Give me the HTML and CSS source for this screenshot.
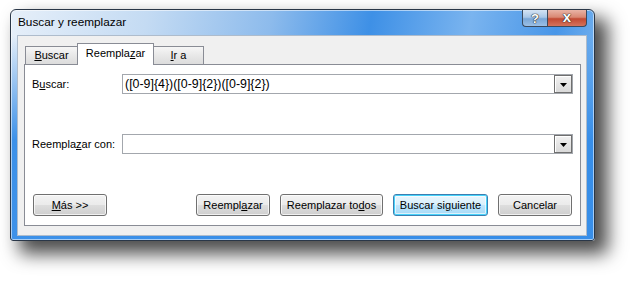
FILE: index.html
```html
<!DOCTYPE html>
<html lang="es">
<head>
    <meta charset="UTF-8">
    <title>Buscar y reemplazar</title>
    <link rel="stylesheet" href="styles.css">
</head>
<body>

<div class="window">
    <div class="titlebar">
        <span class="title">Buscar y reemplazar</span>
        <div class="caption-buttons">
            <span class="cap help">?</span>
            <span class="cap close">x</span>
        </div>
    </div>

    <div class="client">
        <div class="tabs">
            <div class="tab tab-buscar"><u>B</u>uscar</div>
            <div class="tab active">Reempla<u>z</u>ar</div>
            <div class="tab tab-ir"><u>I</u>r a</div>
        </div>

        <div class="panel">
            <div class="field">
                <label for="buscar">B<u>u</u>scar:</label>
                <div class="combo" id="buscar">
                    <span class="combo-text">([0-9]{4})([0-9]{2})([0-9]{2})</span>
                    <span class="combo-btn">
                        <svg width="7" height="4" viewBox="0 0 7 4"><polygon points="0,0 7,0 3.5,4" fill="#000"/></svg>
                    </span>
                </div>
            </div>

            <div class="field">
                <label for="reemplazar">Reempla<u>z</u>ar con:</label>
                <div class="combo" id="reemplazar">
                    <span class="combo-text"></span>
                    <span class="combo-btn">
                        <svg width="7" height="4" viewBox="0 0 7 4"><polygon points="0,0 7,0 3.5,4" fill="#000"/></svg>
                    </span>
                </div>
            </div>

            <div class="actions">
                <button class="btn btn-mas"><u>M</u>ás &gt;&gt;</button>
                <button class="btn btn-reemplazar">Reempl<u>a</u>zar</button>
                <button class="btn btn-todos">Reemplazar to<u>d</u>os</button>
                <button class="btn btn-siguiente default">Buscar si<u>g</u>uiente</button>
                <button class="btn btn-cancelar">Cancelar</button>
            </div>
        </div>
    </div>
</div>

</body>
</html>
```

FILE: styles.css
```css
html {
    background-color: #fff;
}
body {
    margin: 0;
    padding: 9px 0 0 10px;
    min-height: 283px;
    box-sizing: border-box;
    font-family: "Liberation Sans", Arial, sans-serif;
    font-size: 11px;
    color: #000;
}
u {
    text-underline-offset: 1px;
}

/* ventana */
.window {
    box-sizing: border-box;
    width: 585px;
    height: 232px;
    padding: 0 7px 4px 6px;
    border: 1px solid #2a3748;
    border-radius: 6px 6px 3px 3px;
    background:
        linear-gradient(180deg, rgba(52, 140, 232, 0) 0px, rgba(52, 140, 232, 0) 26px, rgba(52, 140, 232, 0.95) 130px),
        linear-gradient(100deg, #e6eff9 0%, #c4dbf3 22%, #8dbbec 42%, #3e90e6 58%, #7ab4ef 74%, #4896e8 88%, #8cc0f2 100%);
    box-shadow: inset 0 0 0 1px rgba(255, 255, 255, 0.55), 11px 11px 18px 2px rgba(0, 0, 0, 0.7);
    display: flex;
    flex-direction: column;
}
.titlebar {
    height: 25px;
    display: flex;
    align-items: flex-start;
    padding-left: 1px;
}
.title {
    font-size: 11.8px;
    line-height: 25px;
    color: #000;
}
.caption-buttons {
    margin-left: auto;
    display: flex;
}
.cap {
    box-sizing: border-box;
    height: 17px;
    border: 1px solid #3b4a5d;
    border-top: none;
    display: flex;
    align-items: center;
    justify-content: center;
    font-weight: bold;
    color: #fff;
    text-shadow: 0 0 1px #2b2b2b, 0 0 1px #2b2b2b, 0 0 1px #2b2b2b;
}
.help {
    width: 25px;
    font-size: 13px;
    border-right: none;
    border-radius: 0 0 0 4px;
    background: linear-gradient(180deg, #d5e4f4 0%, #a9c7e7 45%, #7aa6d6 55%, #9bc0e6 100%);
}
.close {
    width: 40px;
    font-size: 15px;
    line-height: 1;
    padding-bottom: 3px;
    border-radius: 0 0 4px 0;
    background: linear-gradient(180deg, #e9b4a6 0%, #d98873 45%, #c24a33 55%, #d4735c 100%);
}

/* area cliente */
.client {
    box-sizing: border-box;
    height: 201px;
    background-color: #f0f0f0;
    border: 1px solid #aebccc;
    padding: 7px 5px 0 6px;
}
.tabs {
    display: flex;
    align-items: flex-end;
    height: 21px;
    margin-left: 1px;
}
.tab {
    box-sizing: border-box;
    height: 18px;
    border: 1px solid #898c95;
    border-bottom: none;
    background: linear-gradient(180deg, #f6f6f6 0%, #e8e8e8 50%, #dcdcdc 100%);
    text-align: center;
    line-height: 17px;
}
.tab-buscar {
    width: 53px;
}
.tab.active {
    position: relative;
    z-index: 1;
    width: 77px;
    height: 22px;
    margin: 0 -1px -1px -1px;
    background: #fff;
    line-height: 19px;
}
.tab-ir {
    width: 51px;
}
.panel {
    box-sizing: border-box;
    height: 162px;
    border: 1px solid #898c95;
    background-color: #fff;
    padding: 9px 7px 8px 7px;
    display: flex;
    flex-direction: column;
    gap: 40px;
}
.field {
    display: flex;
    align-items: center;
    height: 20px;
}
.field label {
    width: 90px;
}
.combo {
    box-sizing: border-box;
    flex: 1;
    height: 20px;
    border: 1px solid #a3a7ad;
    display: flex;
    align-items: center;
}
.combo-text {
    flex: 1;
    padding-left: 2px;
    font-size: 12.4px;
}
.combo-btn {
    box-sizing: border-box;
    width: 18px;
    height: 18px;
    border: 1px solid #6f6f6f;
    box-shadow: inset 1px 1px 0 #fff;
    background: linear-gradient(180deg, #f2f2f2 0%, #d9d9d9 100%);
    display: flex;
    align-items: center;
    justify-content: center;
    padding-top: 1px;
}

/* botones */
.actions {
    display: flex;
    gap: 10px;
    height: 22px;
    padding: 0 1px 0 1px;
}
.btn {
    box-sizing: border-box;
    height: 22px;
    width: 74px;
    padding: 0;
    border: 1px solid #707070;
    border-radius: 3px;
    background: linear-gradient(180deg, #f3f3f3 0%, #ebebeb 48%, #dddddd 52%, #cfcfcf 100%);
    box-shadow: inset 0 0 0 1px rgba(255, 255, 255, 0.7);
    font-family: "Liberation Sans", Arial, sans-serif;
    font-size: 11px;
    color: #000;
}
.btn-reemplazar {
    margin-left: auto;
}
.btn-todos {
    width: 103px;
}
.btn-siguiente {
    width: 95px;
}
.btn.default {
    border-color: #3c7fb1;
    background: linear-gradient(180deg, #eaf6fd 0%, #d9f0fc 48%, #bee6fd 52%, #a7d9f5 100%);
    box-shadow: inset 0 0 0 1px #48d3fb, inset 0 0 0 2px rgba(255, 255, 255, 0.6);
}
```
